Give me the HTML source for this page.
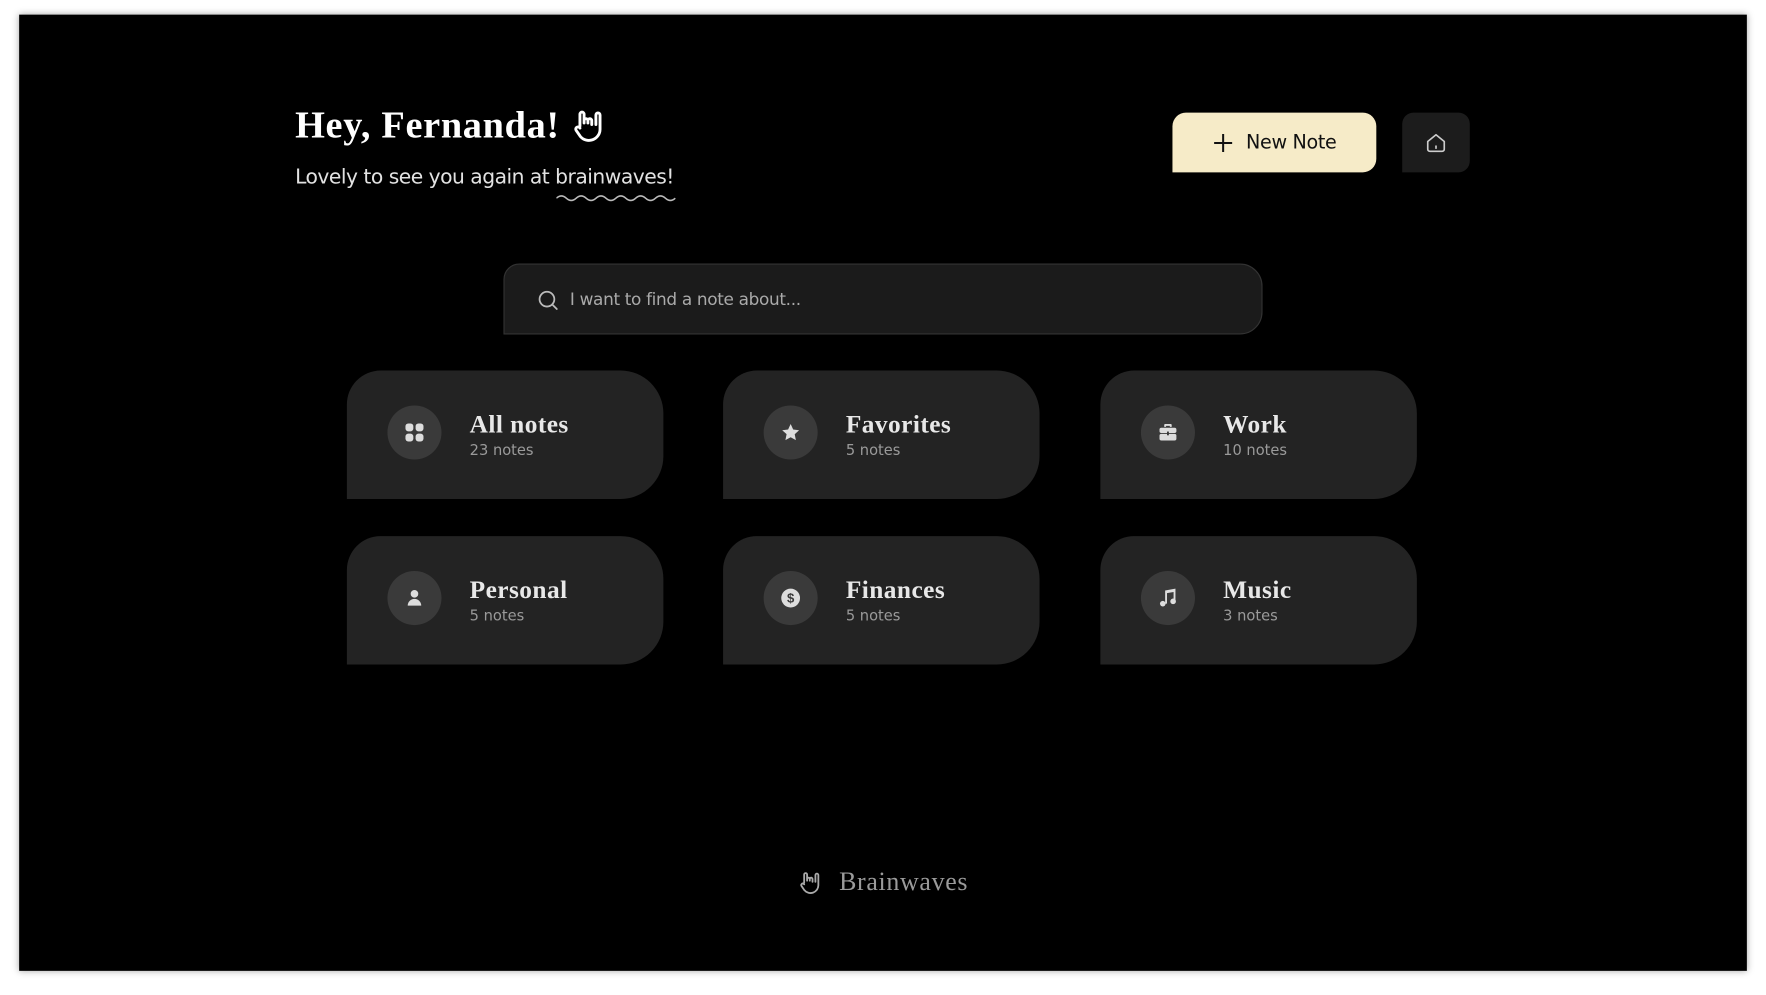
<!DOCTYPE html>
<html><head><meta charset="utf-8"><style>
html,body{margin:0;padding:0;width:1766px;height:995px;overflow:hidden;background:#fff}
#s{position:absolute;left:0;top:0;width:1568px;height:883px;transform:scale(1.12628);transform-origin:0 0}
.frame{position:absolute;left:17px;top:13px;width:1534px;height:849px;background:#000;box-shadow:0 0 6px rgba(0,0,0,.35)}
.a{position:absolute}
.serif{font-family:"Liberation Serif","DejaVu Serif",serif}
.sans{font-family:"DejaVu Sans","Liberation Sans",sans-serif}
.card{position:absolute;width:281px;height:114px;background:#232323;border-radius:30px 38px 38px 0}
.ic{position:absolute;left:36px;top:31px;width:48px;height:48px;border-radius:50%;background:#3a3a3a;display:flex;align-items:center;justify-content:center}
.t{position:absolute;left:109px;top:35px;font-family:"Liberation Serif","DejaVu Serif",serif;font-weight:bold;font-size:22.5px;letter-spacing:.4px;color:#e8e8e8}
.n{position:absolute;left:109px;top:64px;font-family:"DejaVu Sans","Liberation Sans",sans-serif;font-size:13px;color:#9a9a9a}
</style></head><body><div id="s">
<div class="frame"></div>
<div class="a serif" style="left:262px;top:93px;font-size:34px;font-weight:bold;color:#fff;letter-spacing:.6px">Hey, Fernanda!</div>
<svg class="a" style="left:505px;top:95px" width="34" height="34" viewBox="0 0 24 24" fill="none" stroke="#fff" stroke-width="1.8" stroke-linecap="round" stroke-linejoin="round"><path d="M7 12V4.5a1.3 1.3 0 0 1 2.6 0V10M9.6 8.5a1.2 1.2 0 0 1 2.4 0V10M12 8.5a1.2 1.2 0 0 1 2.4 0V10M17 11V5a1.3 1.3 0 0 1 2.6 0v9a7 7 0 0 1-12.4 4.4L4.6 14.6a1.4 1.4 0 0 1 2.1-1.8L7 13.2M14.4 10v1"/></svg>
<div class="a sans" style="left:262px;top:147px;font-size:18px;color:#e2e2e2;letter-spacing:-.45px">Lovely to see you again at brainwaves!</div>
<svg class="a" style="left:494px;top:171px" width="106" height="8" viewBox="0 0 106 8"><path d="M0 5 Q4.4 1 8.8 5 T17.6 5 T26.4 5 T35.2 5 T44 5 T52.8 5 T61.6 5 T70.4 5 T79.2 5 T88 5 T96.8 5 T105.6 5" fill="none" stroke="#bbb" stroke-width="1.4"/></svg>
<div class="a" style="left:1041px;top:100px;width:181px;height:53px;background:#f6ebc8;border-radius:12px 12px 12px 0;display:flex;align-items:center;justify-content:center;gap:10px">
<svg width="20" height="20" viewBox="0 0 20 20"><path d="M10 2v16M2 10h16" stroke="#111" stroke-width="1.8"/></svg>
<span class="sans" style="font-size:17px;color:#111;letter-spacing:-.3px">New Note</span></div>
<div class="a" style="left:1245px;top:100px;width:60px;height:53px;background:#1c1c1c;border-radius:10px 10px 10px 0;display:flex;align-items:center;justify-content:center">
<svg width="22" height="22" viewBox="0 0 24 24" fill="none" stroke="#ccc" stroke-width="1.6" stroke-linejoin="round"><path d="M4 10.5L12 4l8 6.5V18a2 2 0 0 1-2 2H6a2 2 0 0 1-2-2z"/><path d="M12 15v2" stroke-linecap="round"/></svg></div>
<div class="a" style="left:447px;top:234px;width:672px;height:61px;background:#1b1b1b;border:1px solid #333;border-radius:14px 20px 20px 0"></div>
<svg class="a" style="left:476px;top:256px" width="21" height="21" viewBox="0 0 24 24" fill="none" stroke="#bbb" stroke-width="1.8" stroke-linecap="round"><circle cx="11" cy="11" r="7.5"/><path d="M16.5 16.5L21 21"/></svg>
<div class="a sans" style="left:506px;top:257px;font-size:15px;color:#aaa;letter-spacing:-.3px">I want to find a note about...</div>

<div class="card" style="left:308px;top:329px"><div class="ic"><svg width="18" height="18" viewBox="0 0 18 18" fill="#ddd"><rect x="1" y="1" width="7" height="7" rx="2.5"/><rect x="10" y="1" width="7" height="7" rx="2.5"/><rect x="1" y="10" width="7" height="7" rx="2.5"/><rect x="10" y="10" width="7" height="7" rx="2.5"/></svg></div><div class="t">All notes</div><div class="n">23 notes</div></div>
<div class="card" style="left:642px;top:329px"><div class="ic"><svg width="18" height="18" viewBox="0 0 24 24" fill="#ddd"><path d="M12 2l3 6.5 7 .8-5.2 4.8 1.4 7L12 17.6 5.8 21l1.4-7L2 9.3l7-.8z"/></svg></div><div class="t">Favorites</div><div class="n">5 notes</div></div>
<div class="card" style="left:977px;top:329px"><div class="ic"><svg width="20" height="20" viewBox="0 0 24 24" fill="#ddd"><path d="M9 3h6a1 1 0 0 1 1 1v2h-2V5h-4v1H8V4a1 1 0 0 1 1-1z"/><rect x="3" y="7" width="18" height="5.5" rx="2"/><rect x="3" y="13.5" width="18" height="7" rx="2"/><rect x="11" y="11" width="2" height="4" fill="#3a3a3a"/></svg></div><div class="t">Work</div><div class="n">10 notes</div></div>
<div class="card" style="left:308px;top:476px"><div class="ic"><svg width="18" height="18" viewBox="0 0 24 24" fill="#ddd"><circle cx="12" cy="7" r="4.5"/><path d="M4 21a8 8 0 0 1 16 0z"/></svg></div><div class="t">Personal</div><div class="n">5 notes</div></div>
<div class="card" style="left:642px;top:476px"><div class="ic"><svg width="20" height="20" viewBox="0 0 24 24"><circle cx="12" cy="12" r="10" fill="#ddd"/><text x="12" y="17" text-anchor="middle" font-family="Liberation Sans,sans-serif" font-weight="bold" font-size="14" fill="#3a3a3a">$</text></svg></div><div class="t">Finances</div><div class="n">5 notes</div></div>
<div class="card" style="left:977px;top:476px"><div class="ic"><svg width="20" height="20" viewBox="0 0 24 24" fill="#ddd"><path d="M9 4l11-2v13h-2V5.5l-7 1.3V18h-2z"/><circle cx="6.5" cy="18" r="3"/><circle cx="17.5" cy="15.5" r="3"/></svg></div><div class="t">Music</div><div class="n">3 notes</div></div>

<svg class="a" style="left:707px;top:772px" width="24" height="24" viewBox="0 0 24 24" fill="none" stroke="#aaa" stroke-width="1.6" stroke-linecap="round" stroke-linejoin="round"><path d="M7 12V4.5a1.3 1.3 0 0 1 2.6 0V10M9.6 8.5a1.2 1.2 0 0 1 2.4 0V10M12 8.5a1.2 1.2 0 0 1 2.4 0V10M17 11V5a1.3 1.3 0 0 1 2.6 0v9a7 7 0 0 1-12.4 4.4L4.6 14.6a1.4 1.4 0 0 1 2.1-1.8L7 13.2M14.4 10v1"/></svg>
<div class="a serif" style="left:745px;top:770px;font-size:23px;letter-spacing:.6px;color:#9a9a9a">Brainwaves</div>
</div></body></html>
